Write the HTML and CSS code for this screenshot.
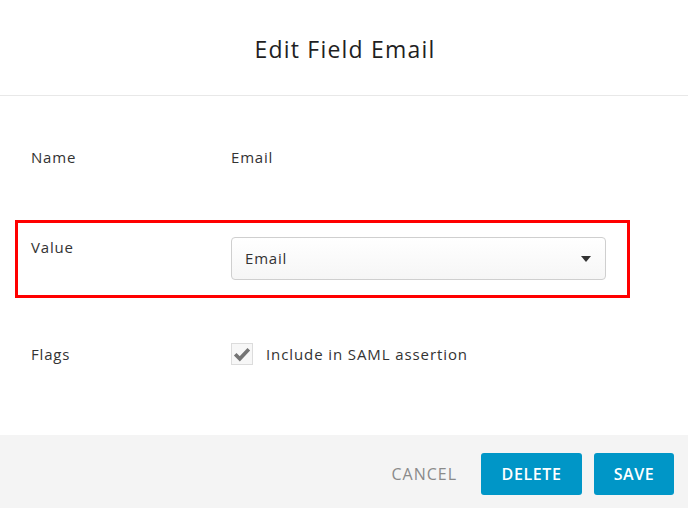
FILE: index.html
```html
<!DOCTYPE html>
<html lang="en">
<head>
<meta charset="utf-8">
<title>Edit Field Email</title>
<link rel="stylesheet" href="styles.css">
</head>
<body>
<div class="dialog">
  <header class="head">
    <h1 class="title">Edit Field Email</h1>
  </header>
  <main class="content">
    <div class="row row-name">
      <div class="label">Name</div>
      <div class="value">Email</div>
    </div>
    <div class="row row-value highlight">
      <div class="label">Value</div>
      <div class="select">
        <span class="select-text">Email</span>
        <svg class="caret" width="10" height="6" viewBox="0 0 10 6"><path d="M0 0H10L5 6Z" fill="#333"/></svg>
      </div>
    </div>
    <div class="row row-flags">
      <div class="label">Flags</div>
      <label class="check">
        <span class="box">
          <svg width="20" height="20" viewBox="0 0 20 20"><path d="M3.2 10.2L7.8 14.8L16.8 5.2" fill="none" stroke="#747474" stroke-width="3.6" stroke-linejoin="miter"/></svg>
        </span>
        <span class="check-text">Include in SAML assertion</span>
      </label>
    </div>
  </main>
  <footer class="foot">
    <button class="btn-link">CANCEL</button>
    <button class="btn btn-delete">DELETE</button>
    <button class="btn btn-save">SAVE</button>
  </footer>
</div>
</body>
</html>
```
FILE: styles.css
```css
html, body {
  margin: 0;
  padding: 0;
  background: #fff;
}
body {
  font-family: "Open Sans", "Liberation Sans", sans-serif;
  color: #333;
}
.dialog {
  width: 688px;
  height: 508px;
  display: flex;
  flex-direction: column;
}
.head {
  height: 95px;
  border-bottom: 1px solid #e8e8e8;
  display: flex;
  align-items: center;
  justify-content: center;
}
.title {
  margin: 0;
  font-size: 23px;
  font-weight: 400;
  color: #1f1f23;
  letter-spacing: 1.2px;
  padding-top: 2px;
  padding-left: 2px;
}
.content {
  flex: 1;
  padding: 51px 58px 0 15px;
}
.row {
  display: flex;
  align-items: flex-start;
  padding-left: 16px;
}
.label {
  width: 200px;
  font-size: 15px;
  line-height: 20px;
  letter-spacing: 0.8px;
  color: #333;
}
.value {
  font-size: 15px;
  line-height: 20px;
  letter-spacing: 0.8px;
  color: #333;
}
.highlight {
  margin-top: 53px;
  border: 3px solid #ff0000;
  padding: 14px 21px 15px 13px;
}
.select {
  width: 346px;
  height: 41px;
  border: 1px solid #cfcfcf;
  border-radius: 4px;
  background: linear-gradient(#ffffff, #f6f6f6);
  display: flex;
  align-items: center;
  justify-content: space-between;
  padding: 0 14px 0 13px;
  box-sizing: content-box;
}
.select-text {
  font-size: 15px;
  letter-spacing: 0.8px;
  color: #333;
  margin-top: -2px;
}
.caret {
  display: block;
  margin-top: 1px;
}
.row-flags {
  margin-top: 45px;
  align-items: center;
}
.check {
  display: flex;
  align-items: center;
}
.box {
  width: 20px;
  height: 20px;
  border: 1px solid #dcdcdc;
  background: #f7f7f7;
  display: flex;
  align-items: center;
  justify-content: center;
}
.box svg {
  display: block;
}
.check-text {
  margin-left: 13px;
  font-size: 15px;
  letter-spacing: 0.9px;
  color: #333;
}
.foot {
  height: 73px;
  background: #f4f4f4;
  display: flex;
  justify-content: flex-end;
  align-items: flex-start;
  padding: 18px 14px 0 0;
  box-sizing: border-box;
  gap: 12px;
}
.btn-link {
  border: 0;
  background: transparent;
  font-family: inherit;
  font-size: 16px;
  color: #8a8a8a;
  height: 42px;
  padding: 0;
  margin-right: 12px;
  letter-spacing: 1px;
}
.btn {
  border: 0;
  border-radius: 3px;
  background: #0096c7;
  color: #fff;
  font-family: inherit;
  font-size: 16px;
  font-weight: 600;
  height: 42px;
  padding: 0;
  letter-spacing: 0.6px;
}
.btn-delete {
  width: 101px;
}
.btn-save {
  width: 80px;
}
```
